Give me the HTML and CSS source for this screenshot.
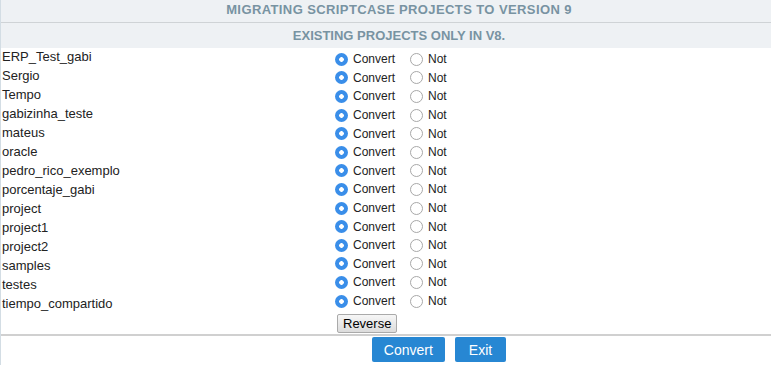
FILE: index.html
```html
<!DOCTYPE html>
<html lang="en"><head>
<meta charset="utf-8">
<title>Migrating Scriptcase projects</title>
<link rel="stylesheet" href="styles.css">
</head>
<body>
<div id="page">
  <div class="title">MIGRATING SCRIPTCASE PROJECTS TO VERSION 9</div>
  <div class="subtitle">EXISTING PROJECTS ONLY IN V8.</div>
  <form name="migrate" onsubmit="return false;">
  <div class="list">
    <div class="names" id="names"></div>
    <div class="choices" id="choices"></div>
  </div>
  <div class="reverse"><button type="button" class="btn-grey" onclick="reverse()">Reverse</button></div>
  <div class="actions">
    <button type="button" class="btn-blue">Convert</button>
    <button type="button" class="btn-blue btn-exit">Exit</button>
  </div>
  </form>
</div>
<script>
const projects = ['ERP_Test_gabi','Sergio','Tempo','gabizinha_teste','mateus','oracle','pedro_rico_exemplo',
  'porcentaje_gabi','project','project1','project2','samples','testes','tiempo_compartido'];
let names = '', choices = '';
projects.forEach((p, i) => {
  names += '<div class="name">' + p + '</div>';
  choices += '<div class="choice">'
    + '<label><input type="radio" name="p' + i + '" value="S" checked><span>Convert</span></label>'
    + '<label><input type="radio" name="p' + i + '" value="N"><span>Not</span></label></div>';
});
document.getElementById('names').innerHTML = names;
document.getElementById('choices').innerHTML = choices;
const reverse = () => {
  projects.forEach((p, i) => {
    const r = document.forms['migrate']['p' + i];
    if (r[0].checked) r[1].checked = true; else r[0].checked = true;
  });
};
</script>
</body></html>
```
FILE: styles.css
```css
body{ margin:0; background:#fff; font-family:"Liberation Sans", Arial, sans-serif; font-size:13px; color:#222; }
#page{ border-left:1px solid #d3dde4; min-height:365px; }
.title, .subtitle{ background:#eef1f4; color:#7893a2; font-weight:bold; font-size:13px; text-align:center; padding-left:26px; }
.title{ height:22px; line-height:20px; border-bottom:1px solid #cfd3d6; letter-spacing:0.4px; }
.subtitle{ height:25px; line-height:25px; }
.list{ display:flex; }
.names{ width:333px; padding-left:1px; }
.name{ height:19px; line-height:18px; }
.choices{ padding-top:2px; font-size:12px; }
.choice{ height:18.6px; display:flex; align-items:center; gap:15px; }
.choice label{ display:flex; align-items:center; }
.choice input{ appearance:none; margin:0 5px 0 0; width:13px; height:13px; border:1px solid #a8a8a8; border-radius:50%; background:#fff; box-sizing:border-box; }
.choice input:checked{ border:none; background:radial-gradient(circle, #fff 0 2px, #3a8ee9 2.6px); }
.reverse{ padding:0 0 0 336px; height:20px; }
.btn-grey{ font-family:"Liberation Sans", Arial, sans-serif; font-size:13px; color:#000; height:19px; padding:0 5px; border:1px solid #aaa; border-radius:2px; background:linear-gradient(#f6f6f6,#dcdcdc); }
.actions{ border-top:2px solid #d0d0d0; display:flex; justify-content:center; gap:10px; padding:1px 0 0 106px; }
.btn-blue{ font-family:"Liberation Sans", Arial, sans-serif; font-size:14px; color:#fff; background:#2787d3; border:none; border-radius:2px; height:25px; padding:0 12px; }
.btn-exit{ padding:0 14px; }
```
